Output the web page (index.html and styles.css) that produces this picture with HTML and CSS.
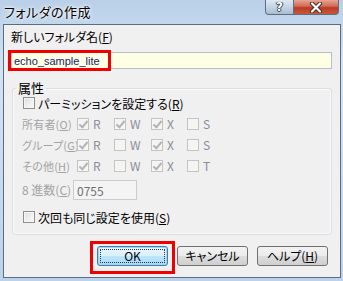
FILE: index.html
```html
<!DOCTYPE html>
<html lang="ja">
<head>
    <meta charset="UTF-8">
    <title>フォルダの作成</title>
    <link rel="stylesheet" href="styles.css">
</head>
<body>
    <div class="window">
        <div class="titlebar">
            <span class="title">フォルダの作成</span>
            <div class="caption-buttons">
                <span class="cap-btn help">?</span>
                <span class="cap-btn close">
                    <svg width="16" height="11" viewBox="0 0 16 11">
                        <path d="M4 1.5 L12 9.5 M12 1.5 L4 9.5" stroke="#4a2e2a" stroke-width="4.2" stroke-linecap="round"/>
                        <path d="M4 1.5 L12 9.5 M12 1.5 L4 9.5" stroke="#fff" stroke-width="2.2" stroke-linecap="round"/>
                    </svg>
                </span>
            </div>
        </div>

        <div class="client">
            <div class="field-label">新しいフォルダ名(<u>F</u>)</div>
            <div class="name-field">
                <input class="name-input" type="text" value="echo_sample_lite">
                <span class="mark mark-name"></span>
            </div>

            <fieldset class="group">
                <legend>属性</legend>
                <div class="check-row">
                    <span class="box"></span>
                    <span>パーミッションを設定する(<u>R</u>)</span>
                </div>

                <div class="perm-grid">
                    <span class="perm-label">所有者(<u>O</u>)</span>
                    <span class="perm"><span class="box off checked"></span>R</span>
                    <span class="perm"><span class="box off checked"></span>W</span>
                    <span class="perm"><span class="box off checked"></span>X</span>
                    <span class="perm"><span class="box off"></span>S</span>

                    <span class="perm-label">グループ(<u>G</u>)</span>
                    <span class="perm"><span class="box off checked"></span>R</span>
                    <span class="perm"><span class="box off"></span>W</span>
                    <span class="perm"><span class="box off checked"></span>X</span>
                    <span class="perm"><span class="box off"></span>S</span>

                    <span class="perm-label">その他(<u>H</u>)</span>
                    <span class="perm"><span class="box off checked"></span>R</span>
                    <span class="perm"><span class="box off"></span>W</span>
                    <span class="perm"><span class="box off checked"></span>X</span>
                    <span class="perm"><span class="box off"></span>T</span>

                    <span class="perm-label octal-label">8 進数(<u>C</u>)</span>
                    <input class="octal-input" type="text" value="0755" disabled>
                </div>

                <div class="check-row next-row">
                    <span class="box"></span>
                    <span>次回も同じ設定を使用(<u>S</u>)</span>
                </div>
            </fieldset>

            <div class="button-row">
                <button class="btn default"><span class="focus">OK</span><span class="mark mark-ok"></span></button>
                <button class="btn">キャンセル</button>
                <button class="btn">ヘルプ(<u>H</u>)</button>
            </div>
        </div>
    </div>
</body>
</html>
```

FILE: styles.css
```css
body {
    margin: 0;
    width: 343px;
    height: 281px;
    overflow: hidden;
    font-family: "Noto Sans CJK JP", sans-serif;
    font-size: 12px;
    font-feature-settings: "palt";
    color: #000;
    background: #c6d9ee;
}

.window {
    height: 281px;
    display: flex;
    flex-direction: column;
    background: linear-gradient(to bottom, #b9d0e8 0%, #d4e3f3 25%, #c8dbef 60%, #bcd2ea 100%);
}

.titlebar {
    height: 24px;
    display: flex;
    justify-content: space-between;
    align-items: flex-start;
}

.title {
    padding: 3px 0 0 4px;
    font-size: 13px;
    line-height: 17px;
    letter-spacing: 0.5px;
    text-shadow: 0 0 5px #fff, 0 0 3px #fff;
}

.caption-buttons {
    display: flex;
    margin-right: 4px;
}

.cap-btn {
    height: 14px;
    display: flex;
    align-items: center;
    justify-content: center;
    border: 1px solid #5e6f84;
    border-top: none;
}

.help {
    width: 27px;
    border-radius: 0 0 0 4px;
    background: linear-gradient(to bottom, #dfe8f2 0%, #c6d5e4 50%, #a9bccf 100%);
    color: #fff;
    font-family: "DejaVu Sans", sans-serif;
    font-weight: bold;
    font-size: 12px;
    line-height: 14px;
    text-shadow: 0 0 1px #2f3d4d, 1px 0 0 #3c4a5a, -1px 0 0 #3c4a5a, 0 1px 0 #3c4a5a;
}

.close {
    width: 44px;
    border-left: none;
    border-radius: 0 0 4px 0;
    background: linear-gradient(to bottom, #e8a596 0%, #d06a55 45%, #bb3a22 55%, #c9583b 100%);
}

.client {
    flex: 1;
    margin: 0 2px 3px 3px;
    border: 1px solid #5b6d82;
    background: #f0f0f0;
    padding: 5px 8px 0 7px;
}

.field-label {
    line-height: 14px;
    height: 14px;
}

.name-field {
    position: relative;
    margin-top: 8px;
}

.name-input {
    display: block;
    box-sizing: border-box;
    width: 321px;
    height: 17px;
    margin: 0;
    padding: 0 2px;
    border: 1px solid #b5c0cc;
    background: #ffffe6;
    font-family: "Liberation Sans", sans-serif;
    font-size: 11px;
    color: #15246b;
}

.mark {
    position: absolute;
    box-sizing: border-box;
    border: 3px solid #f00000;
}

.mark-name {
    left: -3px;
    top: -2px;
    width: 103px;
    height: 21px;
}

.group {
    margin: 12px 0 0 1px;
    padding: 1px 9px 10px 9px;
    border: 1px solid #d5dfe5;
    border-radius: 3px;
    box-shadow: inset 0 0 0 1px #fbfbfb;
}

.group legend {
    margin-left: -6px;
    padding: 0 2px;
    font-size: 13px;
    line-height: 14px;
}

.check-row {
    display: flex;
    align-items: center;
    gap: 3px;
    height: 14px;
    padding-left: 1px;
}

.box {
    position: relative;
    flex: none;
    box-sizing: border-box;
    width: 12px;
    height: 12px;
    border: 1px solid #8e8f8f;
    background: linear-gradient(135deg, #dcdcdc 0%, #eeeeee 50%, #fbfbfb 100%);
    box-shadow: inset 0 0 0 1px #f6f6f6;
}

.box.off {
    border-color: #c3c3c3;
    background: linear-gradient(135deg, #f4f4f4 0%, #f4f4f4 55%, #fbf7d8 100%);
}

.box.checked::after {
    content: "";
    position: absolute;
    left: 3px;
    top: 0;
    width: 3px;
    height: 7px;
    border-right: 2px solid #b4b4b4;
    border-bottom: 2px solid #b4b4b4;
    transform: rotate(40deg);
}

.perm-grid {
    display: grid;
    grid-template-columns: 55px 37px 37px 36px auto;
    grid-template-rows: 14px 14px 14px 20px;
    row-gap: 7px;
    margin-top: 7px;
    color: #a3a3a3;
}

.perm-label {
    font-size: 11px;
    line-height: 14px;
    letter-spacing: 0.2px;
    white-space: nowrap;
}

.octal-label {
    align-self: center;
    font-size: 12px;
    letter-spacing: 0;
}

.perm {
    display: flex;
    align-items: center;
    gap: 4px;
    line-height: 14px;
    color: #8a8d99;
}

.octal-input {
    grid-column: 2 / span 3;
    box-sizing: border-box;
    width: 64px;
    height: 20px;
    margin: 0 0 0 -4px;
    padding: 0 3px;
    border: 1px solid #c9cdd2;
    background: #f4f4f4;
    font-family: "Noto Sans CJK JP", sans-serif;
    font-size: 12px;
    color: #707070;
}

.next-row {
    margin-top: 10px;
}

.button-row {
    display: flex;
    justify-content: flex-end;
    gap: 9px;
    margin-top: 11px;
    padding-right: 4px;
}

.btn {
    position: relative;
    box-sizing: border-box;
    width: 71px;
    height: 20px;
    padding: 0;
    border: 1px solid #707070;
    border-radius: 3px;
    background: linear-gradient(to bottom, #f2f2f2 0%, #ebebeb 50%, #dddddd 51%, #cfcfcf 100%);
    font-family: "Noto Sans CJK JP", sans-serif;
    font-size: 12px;
    font-feature-settings: "palt";
    color: #000;
    line-height: 16px;
}

.btn.default {
    border-color: #3c7fb1;
    background: linear-gradient(to bottom, #eaf6fd 0%, #d9f0fc 50%, #bee6fd 51%, #a7d9f5 100%);
    box-shadow: inset 0 0 0 1px #9fd5f3;
}

.focus {
    display: block;
    margin: 2px;
    border: 1px dotted #333;
    line-height: 12px;
}

.mark-ok {
    left: -8px;
    top: -6px;
    width: 85px;
    height: 33px;
}
```
